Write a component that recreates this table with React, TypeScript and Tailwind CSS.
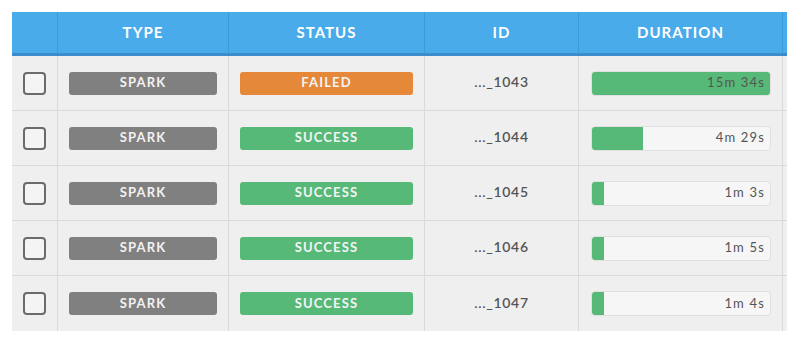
import React from 'react';

type Job = {
  type: string;
  status: 'FAILED' | 'SUCCESS';
  id: string;
  duration: string;
  pct: number;
};

const jobs: Job[] = [
  { type: 'SPARK', status: 'FAILED', id: '..._1043', duration: '15m 34s', pct: 100 },
  { type: 'SPARK', status: 'SUCCESS', id: '..._1044', duration: '4m 29s', pct: 28.5 },
  { type: 'SPARK', status: 'SUCCESS', id: '..._1045', duration: '1m 3s', pct: 6.7 },
  { type: 'SPARK', status: 'SUCCESS', id: '..._1046', duration: '1m 5s', pct: 6.7 },
  { type: 'SPARK', status: 'SUCCESS', id: '..._1047', duration: '1m 4s', pct: 6.7 },
];

const cols = 'grid grid-cols-[46px_171px_196px_154px_204px_4px]';

export default function App() {
  return (
    <div className="h-[345px] w-[800px] bg-white pl-[12px] pt-[12px] font-['Lato','Open_Sans',sans-serif]">
      <div className="w-[775px]">
        <div className={`${cols} h-[44px] border-b-[3px] border-[#3a8ccb] bg-[#4aabea] text-[15px] font-bold tracking-[0.07em] text-white`}>
          <div className="border-r border-[#3d9ad8]" />
          <div className="flex items-center justify-center border-r border-[#3d9ad8]">TYPE</div>
          <div className="flex items-center justify-center border-r border-[#3d9ad8]">STATUS</div>
          <div className="flex items-center justify-center border-r border-[#3d9ad8]">ID</div>
          <div className="flex items-center justify-center border-r border-[#3d9ad8]">DURATION</div>
          <div />
        </div>
        {jobs.map((j, i) => (
          <div
            key={j.id}
            className={`${cols} h-[55px] bg-[#efefef] ${i < jobs.length - 1 ? 'border-b border-[#dadada]' : ''}`}
          >
            <div className="flex items-center justify-center border-r border-[#dadada]">
              <div className="ml-[-1px] h-[23px] w-[23px] rounded-[4px] border-2 border-[#6b6b6b] bg-[#f4f4f4]" />
            </div>
            <div className="flex items-center border-r border-[#dadada] pl-[11px]">
              <div className="flex h-[23px] w-[148px] items-center justify-center rounded-[3px] bg-[#808080] text-[13px] font-bold tracking-[0.09em] text-[#f2f2f2]">
                {j.type}
              </div>
            </div>
            <div className="flex items-center border-r border-[#dadada] pl-[11px]">
              <div
                className={`flex h-[23px] w-[173px] items-center justify-center rounded-[3px] text-[13px] font-bold tracking-[0.09em] text-[#f4f4f4] ${
                  j.status === 'FAILED' ? 'bg-[#e5883a]' : 'bg-[#57b978]'
                }`}
              >
                {j.status}
              </div>
            </div>
            <div className="flex items-center justify-center border-r border-[#dadada] pb-[3px] text-[14px] font-semibold tracking-[0.05em] text-[#555]">
              {j.id}
            </div>
            <div className="flex items-center border-r border-[#dadada] pl-[12px]">
              <div className="relative h-[25px] w-[180px] overflow-hidden rounded-[4px] border border-[#e0e0e0] bg-[#f6f6f6]">
                <div className="absolute inset-y-0 left-0 bg-[#57b978]" style={{ width: `${j.pct}%` }} />
                <div className="relative flex h-full items-center justify-end pr-[5px] text-[13px] tracking-[0.09em] text-[#555]">
                  {j.duration}
                </div>
              </div>
            </div>
            <div />
          </div>
        ))}
      </div>
    </div>
  );
}
